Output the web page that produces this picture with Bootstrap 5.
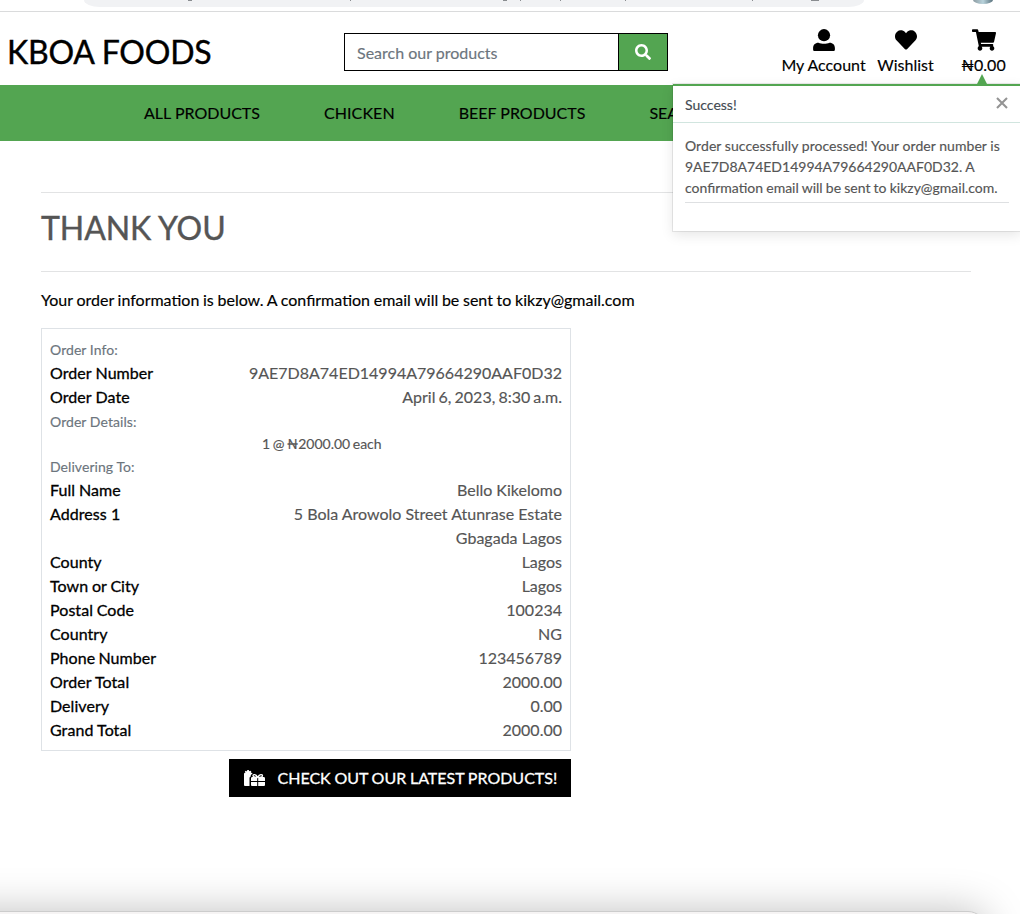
<!DOCTYPE html>
<html lang="en">
<head>
<meta charset="utf-8">
<meta name="viewport" content="width=device-width, initial-scale=1">
<title>KBOA Foods</title>
<link href="https://cdn.jsdelivr.net/npm/bootstrap@5.3.0/dist/css/bootstrap.min.css" rel="stylesheet">
<style>
body{font-family:Lato,"Liberation Sans",sans-serif;color:#000;background:#fff;height:914px;overflow:hidden;font-size:16px;line-height:24px;-webkit-text-stroke:.15px currentColor}
.chrome-strip{height:12px;border-bottom:1px solid #dadbdc}
.chrome-pill{margin-left:84px;width:780px;height:7px;background:#f1f2f4;border-radius:0 0 16px 16px/0 0 7px 7px}
.avatar-dot{width:20px;height:4px;margin-left:109px;border-radius:0 0 10px 10px/0 0 4px 4px;background:linear-gradient(90deg,#8b9aa0,#b9d3dc 50%,#59717c)}
.top-header{height:73px}
.top-header>*,.chrome-strip>*,.account-links>*{flex-shrink:0}
.brand-name{font-size:32px;line-height:38px;margin:21px 0 0 7px;width:337px;letter-spacing:-.2px;-webkit-text-stroke:.4px #000}
.search-box.input-group{width:324px;height:38px;margin-top:21px}
.search-box .form-control,.search-box .btn{border:1px solid #000;border-radius:0}
.search-box .form-control{color:#6c757d;padding:7px 12px 5px}
.search-box .form-control::placeholder{color:#6c757d;opacity:1}
.search-box .btn{width:50px;background:#53a551;padding:0}
.account-links{padding-top:17px;margin-left:108px}
.account-links svg{height:22px;display:block;margin:0 auto}
.account-links .link-text{margin-top:2px;white-space:nowrap}
.main-nav{height:56px;background:#53a551;padding-left:144px;gap:64px;white-space:nowrap}
.toast-box{top:84px;left:673px;width:348px;height:147px;background:#fff;border-top:2px solid #53a551;box-shadow:0 4px 12px rgba(0,0,0,.1),0 0 0 1px rgba(0,0,0,.08);font-size:14px;line-height:21px;color:#555;z-index:2}
.toast-title{height:37px;border-bottom:1px solid #d1e5df;padding:0 13px 0 12px;color:#444b53}
.toast-msg{margin:12px 12px 0;height:68px;border-bottom:1px solid #dee0e2;white-space:nowrap}
.toast-arrow{left:304px;top:-12px;border:5px solid transparent;border-top:0;border-bottom:10px solid #53a551}
.page-main{width:930px;margin:51px 0 0 41px}
.rule{border-top:1px solid #e2e3e4}
.thanks{font-size:32px;line-height:38px;color:#555;margin:16px 0 24px;letter-spacing:-.1px;-webkit-text-stroke:.4px #555}
.order-box{width:530px;height:423px;border:1px solid #dee2e6;margin-top:16px;padding:10px 8px 0;color:#555}
.order-box .sub{font-size:14px;color:#6c757d;letter-spacing:.06px}
.dark{color:#000;letter-spacing:.06px;-webkit-text-stroke:.3px #000}
.each-line{font-size:14px;line-height:21px;padding-left:212px;word-spacing:-1px}
.tight{word-spacing:-.4px}
.shop-btn{width:342px;height:38px;margin:8px 0 0 188px;background:#000;color:#fff;padding-left:15px;word-spacing:-.4px}
.shop-btn span{-webkit-text-stroke:.3px #fff}
.dock-clip{left:0;right:0;bottom:0;height:60px;overflow:hidden;pointer-events:none}
.dock-sheet{top:57px;left:-60px;width:1046px;height:60px;background:#f6f4f4;border:1px solid #ccc;border-radius:18px;box-shadow:0 0 42px rgba(0,0,0,.25)}
</style>
</head>
<body class="position-relative">
<div class="chrome-strip d-flex">
  <div class="chrome-pill"><svg class="d-block" width="780" height="7" fill="#8a8d90"><path d="M104 0h4v1h-4zM266 0h1v1h-1zM419 0h4v1h-4zM436 0h1v1h-1zM476 0h1v1h-1zM541 0h1v1h-1zM668 0h1v1h-1zM727 0h8v1h-8z"/></svg></div>
  <div class="avatar-dot"></div>
</div>
<header class="top-header d-flex">
  <div class="brand-name">KBOA FOODS</div>
  <form class="search-box input-group flex-nowrap">
    <input class="form-control" type="text" placeholder="Search our products" aria-label="Search">
    <button class="btn d-flex align-items-center justify-content-center" type="button" aria-label="Search"><svg width="16" height="16" viewBox="0 0 512 512" fill="#fff"><path d="M505 442.7L405.3 343c-4.5-4.5-10.6-7-17-7H372c27.6-35.3 44-79.7 44-128C416 93.1 322.9 0 208 0S0 93.1 0 208s93.1 208 208 208c48.3 0 92.7-16.4 128-44v16.3c0 6.4 2.5 12.5 7 17l99.7 99.7c9.4 9.4 24.6 9.4 33.9 0l28.3-28.3c9.4-9.4 9.4-24.6.1-34zM208 336c-70.7 0-128-57.2-128-128 0-70.7 57.2-128 128-128 70.7 0 128 57.2 128 128 0 70.7-57.2 128-128 128z"/></svg></button>
  </form>
  <div class="account-links d-flex text-center">
    <div style="width:95px"><svg width="22" viewBox="0 0 22 22"><circle cx="11" cy="6.2" r="6.1"/><path d="M5.5 13.8C7 14.5 9 14.8 11 14.8s4-.3 5.5-1c3.5 0 5.4 2.3 5.4 5.2v1.400c0 1-.6 1.600-1.600 1.600H1.700C.7 22 .1 21.400.1 20.400V19c0-2.900 1.900-5.200 5.400-5.200z"/></svg><div class="link-text">My Account</div></div>
    <div style="width:69px"><svg width="22" viewBox="0 0 512 512"><path d="M462.3 62.6C407.5 15.9 326 24.3 275.7 76.2L256 96.5l-19.7-20.3C186.1 24.3 104.5 15.9 49.7 62.6c-62.8 53.6-66.1 149.8-9.9 207.9l193.5 199.8c12.5 12.9 32.8 12.9 45.3 0l193.5-199.8c56.3-58.1 53-154.3-9.8-207.9z"/></svg><div class="link-text">Wishlist</div></div>
    <div style="width:87px"><svg width="24" viewBox="0 0 576 512"><path d="M528.12 301.319l47.273-208C578.806 78.301 567.391 64 551.99 64H159.208l-9.166-44.81C147.758 8.021 137.93 0 126.529 0H24C10.745 0 0 10.745 0 24v16c0 13.255 10.745 24 24 24h69.883l70.248 343.435C147.325 417.1 136 435.222 136 456c0 30.928 25.072 56 56 56s56-25.072 56-56c0-15.674-6.447-29.835-16.824-40h209.647C430.447 426.165 424 440.326 424 456c0 30.928 25.072 56 56 56s56-25.072 56-56c0-22.172-12.888-41.332-31.579-50.405l5.517-24.276c3.413-15.018-8.002-29.319-23.403-29.319H218.117l-6.545-32h293.145c11.206 0 20.92-7.754 23.403-18.681z"/></svg><div class="link-text">₦0.00</div></div>
  </div>
</header>
<nav class="main-nav d-flex align-items-center overflow-hidden">
  <span>ALL PRODUCTS</span><span style="letter-spacing:.1px">CHICKEN</span><span>BEEF PRODUCTS</span><span>SEA</span>
</nav>
<div class="toast-box position-absolute">
  <div class="toast-arrow position-absolute"></div>
  <div class="toast-title d-flex justify-content-between align-items-center"><span>Success!</span><svg width="12" height="12" viewBox="0 0 12 12" stroke="#949494" stroke-width="2.1" style="margin-top:-3px"><path d="M1 1l10 10M11 1L1 11"/></svg></div>
  <div class="toast-msg"><span style="letter-spacing:.05px">Order successfully processed! Your order number is</span><br>9AE7D8A74ED14994A79664290AAF0D32. A<br><span class="tight">confirmation email will be sent to kikzy@gmail.com.</span></div>
</div>
<main class="page-main">
  <div class="rule"></div>
  <h2 class="thanks fw-normal">THANK YOU</h2>
  <div class="rule"></div>
  <p class="mb-0 tight" style="padding-top:16px">Your order information is below. A confirmation email will be sent to <span>kikzy@gmail.com</span></p>
  <section class="order-box">
    <div class="sub" style="height:22px;margin-top:-1px;margin-bottom:1px">Order Info:</div>
    <div class="d-flex justify-content-between"><span class="dark">Order Number</span><span>9AE7D8A74ED14994A79664290AAF0D32</span></div>
    <div class="d-flex justify-content-between"><span class="dark">Order Date</span><span style="word-spacing:-1px">April 6, 2023, 8:30 a.m.</span></div>
    <div class="sub" style="height:24px;padding-top:1px">Order Details:</div>
    <div class="each-line">1 @ ₦2000.00 each</div>
    <div class="sub" style="height:24px;padding-top:1px">Delivering To:</div>
    <div class="d-flex justify-content-between"><span class="dark tight">Full Name</span><span>Bello Kikelomo</span></div>
    <div class="d-flex justify-content-between"><span class="dark">Address 1</span><span class="text-end">5 Bola Arowolo Street Atunrase Estate<br>Gbagada Lagos</span></div>
    <div class="d-flex justify-content-between"><span class="dark">County</span><span>Lagos</span></div>
    <div class="d-flex justify-content-between"><span class="dark tight">Town or City</span><span>Lagos</span></div>
    <div class="d-flex justify-content-between"><span class="dark tight">Postal Code</span><span>100234</span></div>
    <div class="d-flex justify-content-between"><span class="dark">Country</span><span>NG</span></div>
    <div class="d-flex justify-content-between"><span class="dark" style="word-spacing:-1px">Phone Number</span><span>123456789</span></div>
    <div class="d-flex justify-content-between"><span class="dark">Order Total</span><span>2000.00</span></div>
    <div class="d-flex justify-content-between"><span class="dark">Delivery</span><span>0.00</span></div>
    <div class="d-flex justify-content-between"><span class="dark">Grand Total</span><span>2000.00</span></div>
  </section>
  <a class="shop-btn d-flex align-items-center text-decoration-none" href="#"><svg width="21" height="16" viewBox="0 0 21 16" fill="#fff" style="margin-right:12.5px"><path d="M1.5 2.5L.8 1.5l1.2-.7.9.6L3.3 0h1.5l.4 1.3L6.3.8l1 .8-.5.9c1 .1 1.5.5 1.700 1.300C7 4.300 6.400 5.400 6.800 6.500 5.800 6.800 5.500 7.500 5.500 8.500V16H1.300C.5 16 0 15.500 0 14.700V4c0-.9.6-1.400 1.500-1.500z"/><path d="M7 11V8.400C7 7.600 7.500 7 8.300 7h4.900v4zM14.200 11V7h5.500c.8 0 1.300.6 1.300 1.400V11zM7 12h6.200v4H8.300C7.500 16 7 15.500 7 14.700zM14.200 12H21v2.700c0 .8-.5 1.300-1.300 1.300h-5.500z"/><path d="M13.700 7.300C12 7.300 9 7 9 5.700S11.700 3.800 13.700 7.300C15.700 3.800 18.500 4.400 18.500 5.700S15.500 7.300 13.700 7.300z" fill="none" stroke="#fff" stroke-width="1.300"/></svg><span>CHECK OUT OUR LATEST PRODUCTS!</span></a>
</main>
<div class="dock-clip position-absolute"><div class="dock-sheet position-absolute"></div></div>
</body>
</html>
